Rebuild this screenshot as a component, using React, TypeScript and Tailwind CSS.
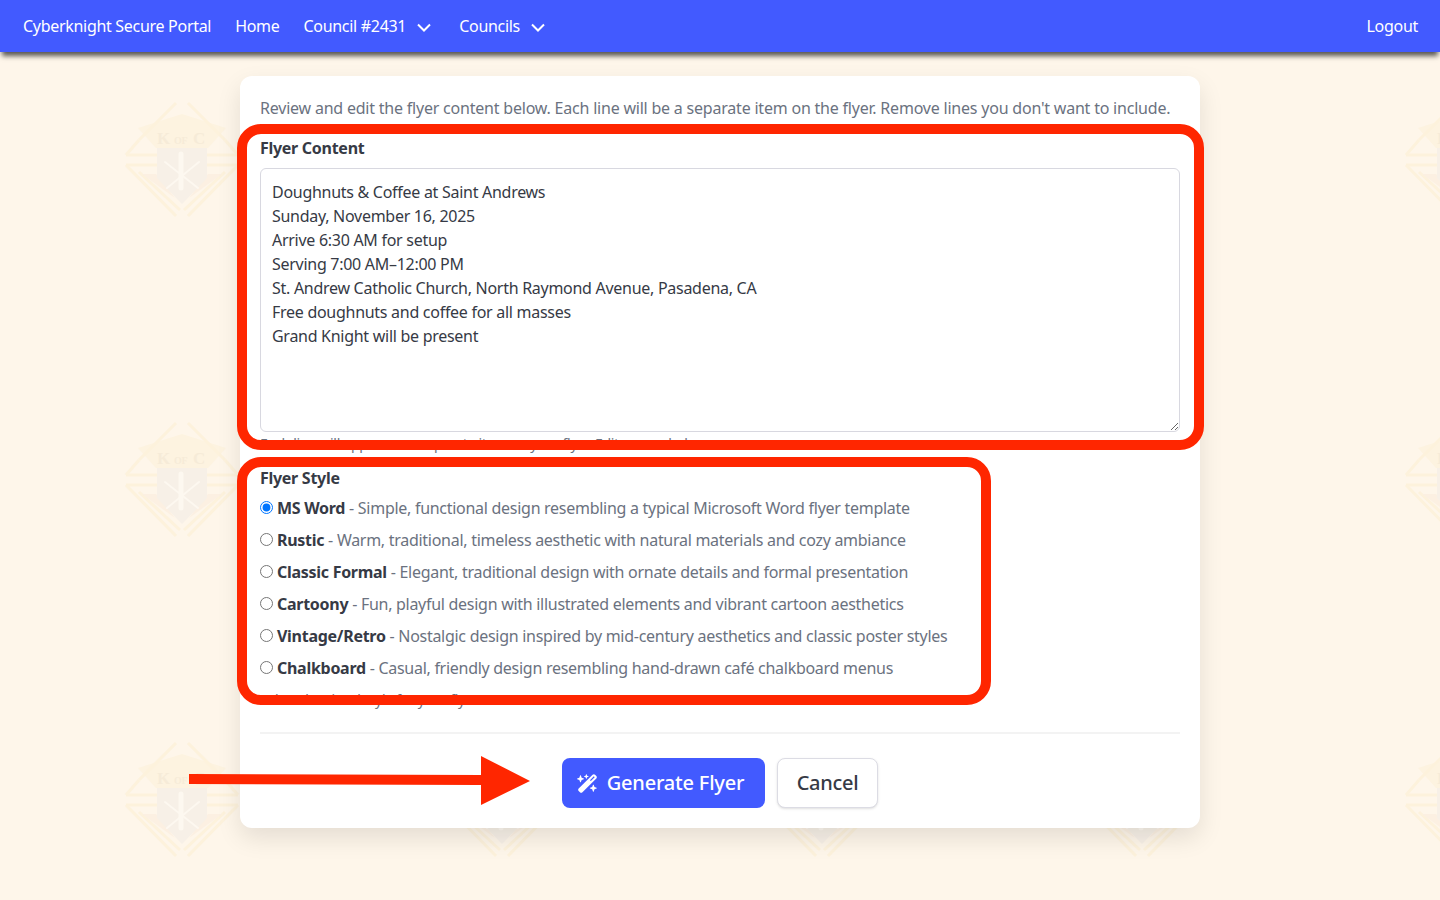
import React from "react";
import { FaWandMagicSparkles } from "react-icons/fa6";

const flyerText = `Doughnuts & Coffee at Saint Andrews
Sunday, November 16, 2025
Arrive 6:30 AM for setup
Serving 7:00 AM–12:00 PM
St. Andrew Catholic Church, North Raymond Avenue, Pasadena, CA
Free doughnuts and coffee for all masses
Grand Knight will be present`;

const styles = [
  { name: "MS Word", desc: "Simple, functional design resembling a typical Microsoft Word flyer template" },
  { name: "Rustic", desc: "Warm, traditional, timeless aesthetic with natural materials and cozy ambiance" },
  { name: "Classic Formal", desc: "Elegant, traditional design with ornate details and formal presentation" },
  { name: "Cartoony", desc: "Fun, playful design with illustrated elements and vibrant cartoon aesthetics" },
  { name: "Vintage/Retro", desc: "Nostalgic design inspired by mid-century aesthetics and classic poster styles" },
  { name: "Chalkboard", desc: "Casual, friendly design resembling hand-drawn café chalkboard menus" },
];

function Emblem({ label }: { label: boolean }) {
  return (
    <svg width="124" height="124" viewBox="0 0 124 124" className="block">
      <path d="M18 30 L62 16 L106 30 L88 50 H36 Z" fill="#fdf3e0" />
      <g fill="none" stroke="#fdf2dc" strokeWidth="3">
        <path d="M56 5 L19 42 M68 5 L105 42" />
        <path d="M6 57 H37 M118 57 H87" />
        <path d="M6 67 H37 M118 67 H87" />
        <path d="M6 67 L56 118 M118 67 L68 118" />
        <path d="M19 74 L60 112 M105 74 L64 112" />
        <path d="M6 57 L19 42 M118 57 L105 42" />
      </g>
      <path d="M22 76 L36 76 L55 100 Z M102 76 L88 76 L69 100 Z" fill="#fcf0e2" />
      {label && (
        <text y="46" fontFamily="'Liberation Serif', serif" fontWeight="700" fontSize="17" fill="#f6ebd8">
          <tspan x="37">K</tspan>
          <tspan x="54" fontSize="10">OF</tspan>
          <tspan x="73">C</tspan>
        </text>
      )}
      <path d="M37 50 H87 V80 L62 106 L37 80 Z" fill="#f7f0e7" />
      <g fill="none" stroke="#fdf8f0" strokeLinecap="round">
        <path d="M61 56 V90" strokeWidth="5" />
        <path d="M45 64 L78 90 M79 64 L47 90" strokeWidth="2" />
      </g>
    </svg>
  );
}

function Watermark() {
  return (
    <div className="absolute inset-0 overflow-hidden">
      <div className="grid w-[1600px] grid-cols-[repeat(5,320px)] grid-rows-[repeat(3,320px)] pl-[120px] pt-[98px]">
        {Array.from({ length: 15 }).map((_, i) => (
          <div key={i}>
            <Emblem label={i % 5 === 0 || i % 5 === 4} />
          </div>
        ))}
      </div>
    </div>
  );
}

function NavItem({ label, menu }: { label: string; menu?: boolean }) {
  return (
    <a className="flex items-center gap-[11px] text-white">
      {label}
      {menu && (
        <svg width="14" height="9" viewBox="0 0 14 9" className="mr-[4px] mt-[3px]">
          <path d="M1 1.5 L7 7.5 L13 1.5" fill="none" stroke="white" strokeWidth="2" />
        </svg>
      )}
    </a>
  );
}

export default function App() {
  return (
    <div className="relative h-[900px] overflow-hidden bg-[#fef6ea] font-['Noto_Sans',sans-serif] text-[16px] leading-6 tracking-[-0.28px]">
      <Watermark />

      <nav className="relative z-10 flex h-[52px] items-center justify-between bg-[#425aff] pl-[23px] pr-[22px] shadow-[0_6px_5px_-2px_rgba(0,0,0,0.65)]">
        <div className="flex items-center gap-[24px] tracking-[-0.3px]">
          <NavItem label="Cyberknight Secure Portal" />
          <NavItem label="Home" />
          <NavItem label="Council #2431" menu />
          <NavItem label="Councils" menu />
        </div>
        <NavItem label="Logout" />
      </nav>

      <main className="relative mx-auto mt-6 h-[752px] w-[960px] rounded-xl bg-white p-5 shadow-[0_10px_25px_rgba(0,0,0,0.1)]">
        <p className="whitespace-nowrap tracking-[-0.21px] text-[#6b7280]">
          Review and edit the flyer content below. Each line will be a separate item on the flyer. Remove lines you don't want to include.
        </p>

        <div className="mt-4">
          <label className="block font-bold text-[#363a45]">Flyer Content</label>
          <textarea
            readOnly
            defaultValue={flyerText}
            className="mt-2 block h-[264px] w-full rounded-md border border-[#d8d8e0] px-[11px] py-[11px] text-[#363a45] outline-none"
          />
          <p className="mt-0.5 text-sm text-[#6b7280]">Each line will appear as a separate item on your flyer. Edit as needed.</p>
        </div>

        <div className="mt-3">
          <label className="block font-bold text-[#363a45]">Flyer Style</label>
          <div className="mt-1.5 flex flex-col gap-2">
            {styles.map((s, i) => (
              <label key={s.name} className="flex items-center gap-1 text-[#6b7280]">
                <input type="radio" name="style" defaultChecked={i === 0} className="m-0 mb-[2px] h-[13px] w-[13px]" />
                <span>
                  <strong className="font-bold text-[#363a45]">{s.name}</strong> - {s.desc}
                </span>
              </label>
            ))}
          </div>
          <p className="mt-[10px] text-sm text-[#6b7280]">Select the visual style for your flyer</p>
        </div>

        <div className="mt-[22px] flex items-center justify-center gap-3 border-t-2 border-[#f3f3f3] pt-6">
          <button className="flex h-[50px] w-[203px] items-center justify-center gap-[9px] rounded-lg bg-[#425aff] pr-[6px] text-[20px] font-medium tracking-[-0.2px] text-white">
            <FaWandMagicSparkles size={21} />
            Generate Flyer
          </button>
          <button className="h-[50px] w-[101px] rounded-lg border border-[#dcdce4] bg-white text-[20px] font-medium text-[#363a45] shadow-sm">
            Cancel
          </button>
        </div>
      </main>

      <div className="absolute left-[237px] top-[124px] h-[326px] w-[967px] rounded-[24px] border-[10px] border-[#ff2600]" />
      <div className="absolute left-[237px] top-[457px] h-[248px] w-[754px] rounded-[24px] border-[10px] border-[#ff2600]" />
      <svg className="absolute left-[185px] top-[750px]" width="350" height="60" viewBox="0 0 350 60">
        <path d="M4 24 L296 25 V6 L345 31 L296 55 V35 L4 34 Z" fill="#ff2600" />
      </svg>
    </div>
  );
}
